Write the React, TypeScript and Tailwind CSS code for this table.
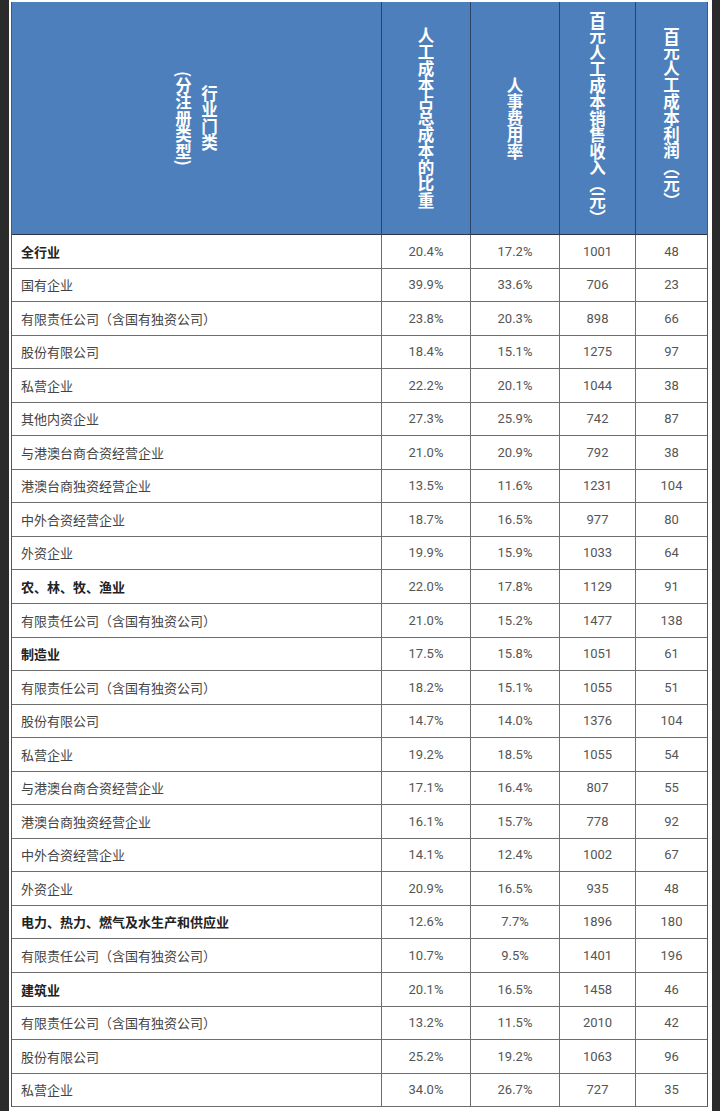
import React from "react";

type Row = { name: string; bold?: boolean; a: string; b: string; c: string; d: string };

const rows: Row[] = [
  { name: "全行业", bold: true, a: "20.4%", b: "17.2%", c: "1001", d: "48" },
  { name: "国有企业", a: "39.9%", b: "33.6%", c: "706", d: "23" },
  { name: "有限责任公司（含国有独资公司）", a: "23.8%", b: "20.3%", c: "898", d: "66" },
  { name: "股份有限公司", a: "18.4%", b: "15.1%", c: "1275", d: "97" },
  { name: "私营企业", a: "22.2%", b: "20.1%", c: "1044", d: "38" },
  { name: "其他内资企业", a: "27.3%", b: "25.9%", c: "742", d: "87" },
  { name: "与港澳台商合资经营企业", a: "21.0%", b: "20.9%", c: "792", d: "38" },
  { name: "港澳台商独资经营企业", a: "13.5%", b: "11.6%", c: "1231", d: "104" },
  { name: "中外合资经营企业", a: "18.7%", b: "16.5%", c: "977", d: "80" },
  { name: "外资企业", a: "19.9%", b: "15.9%", c: "1033", d: "64" },
  { name: "农、林、牧、渔业", bold: true, a: "22.0%", b: "17.8%", c: "1129", d: "91" },
  { name: "有限责任公司（含国有独资公司）", a: "21.0%", b: "15.2%", c: "1477", d: "138" },
  { name: "制造业", bold: true, a: "17.5%", b: "15.8%", c: "1051", d: "61" },
  { name: "有限责任公司（含国有独资公司）", a: "18.2%", b: "15.1%", c: "1055", d: "51" },
  { name: "股份有限公司", a: "14.7%", b: "14.0%", c: "1376", d: "104" },
  { name: "私营企业", a: "19.2%", b: "18.5%", c: "1055", d: "54" },
  { name: "与港澳台商合资经营企业", a: "17.1%", b: "16.4%", c: "807", d: "55" },
  { name: "港澳台商独资经营企业", a: "16.1%", b: "15.7%", c: "778", d: "92" },
  { name: "中外合资经营企业", a: "14.1%", b: "12.4%", c: "1002", d: "67" },
  { name: "外资企业", a: "20.9%", b: "16.5%", c: "935", d: "48" },
  { name: "电力、热力、燃气及水生产和供应业", bold: true, a: "12.6%", b: "7.7%", c: "1896", d: "180" },
  { name: "有限责任公司（含国有独资公司）", a: "10.7%", b: "9.5%", c: "1401", d: "196" },
  { name: "建筑业", bold: true, a: "20.1%", b: "16.5%", c: "1458", d: "46" },
  { name: "有限责任公司（含国有独资公司）", a: "13.2%", b: "11.5%", c: "2010", d: "42" },
  { name: "股份有限公司", a: "25.2%", b: "19.2%", c: "1063", d: "96" },
  { name: "私营企业", a: "34.0%", b: "26.7%", c: "727", d: "35" },
];

const cjk = "font-['Noto_Sans_CJK_SC','Noto_Sans',sans-serif]";
const num = "font-['Roboto','Noto_Sans_CJK_SC',sans-serif]";
const grid = "grid grid-cols-[370px_89px_89px_76px_71px]";

function HeadCell({ children, last }: { children: React.ReactNode; last?: boolean }) {
  return (
    <div
      className={`flex items-center justify-center ${last ? "" : "border-r border-[#2e4466]"}`}
    >
      {children}
    </div>
  );
}

function VText({ children }: { children: React.ReactNode }) {
  return (
    <div
      className={`[writing-mode:vertical-rl] text-white font-bold text-[16.5px] leading-[26px] text-center ${cjk}`}
    >
      {children}
    </div>
  );
}

export default function App() {
  return (
    <div className="flex h-[1111px] w-[720px] overflow-hidden bg-white">
      <div className="w-[9px] shrink-0 bg-[#2b2b2b]" />
      <div className="w-[2px] shrink-0 bg-white" />
      <div className="flex w-[697px] shrink-0 flex-col pt-[2px]">
        <div className="border-l border-r border-[#555]">
          {/* header */}
          <div className={`${grid} h-[233px] border-b border-[#2a3548] bg-[#4d7fbd]`}>
            <HeadCell>
              <VText>
                行业门类
                <br />
                (分注册类型)
              </VText>
            </HeadCell>
            <HeadCell>
              <VText>人工成本占总成本的比重</VText>
            </HeadCell>
            <HeadCell>
              <VText>人事费用率</VText>
            </HeadCell>
            <HeadCell>
              <VText>百元人工成本销售收入（元）</VText>
            </HeadCell>
            <HeadCell last>
              <VText>百元人工成本利润（元）</VText>
            </HeadCell>
          </div>
          {/* body */}
          {rows.map((r, i) => (
            <div key={i} className={`${grid} h-[33.56px] border-b border-[#6e6e6e]`}>
              <div
                className={`flex items-center border-r border-[#6e6e6e] pl-[9px] text-[13px] ${cjk} ${
                  r.bold ? "font-bold text-[#222]" : "text-[#444]"
                }`}
              >
                {r.name}
              </div>
              <div className={`flex items-center justify-center border-r border-[#6e6e6e] text-[13px] text-[#555] ${num}`}>
                {r.a}
              </div>
              <div className={`flex items-center justify-center border-r border-[#6e6e6e] text-[13px] text-[#555] ${num}`}>
                {r.b}
              </div>
              <div className={`flex items-center justify-center border-r border-[#6e6e6e] text-[13px] text-[#555] ${num}`}>
                {r.c}
              </div>
              <div className={`flex items-center justify-center text-[13px] text-[#555] ${num}`}>
                {r.d}
              </div>
            </div>
          ))}
        </div>
      </div>
      <div className="w-[4px] shrink-0 bg-white" />
      <div className="flex-1 bg-[#2b2b2b]" />
    </div>
  );
}
